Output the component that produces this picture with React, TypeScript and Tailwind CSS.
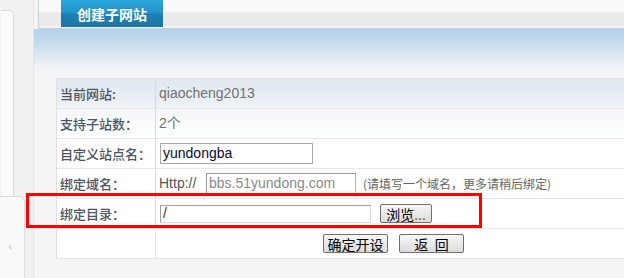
export default function App() {
  const label =
    "flex items-center pl-[3px] text-[13px] font-medium text-[#4a5566] border-r border-[#d9d9d9] font-['Noto_Sans_CJK_SC',sans-serif] leading-none";
  const row = "grid grid-cols-[99px_1fr] h-[30px] border-b border-[#e6e6e6]";
  const btn =
    "h-[19px] flex items-center justify-center border border-[#707070] rounded-[2px] bg-[linear-gradient(#f7f7f7,#dcdcdc)] text-[14px] text-black font-['Noto_Sans_CJK_SC',sans-serif] leading-none";
  return (
    <div className="relative w-[624px] h-[278px] overflow-hidden flex bg-[#f5f5f5] font-['Liberation_Sans','Noto_Sans_CJK_SC',sans-serif]">
      {/* left sidebar */}
      <div className="relative w-[34px] shrink-0 bg-[#f1f1f1] border-r border-[#e4e4e4]">
        <div className="absolute left-[1px] top-[10px] bottom-0 w-[13px] bg-[#fbfbfb] border-r border-t border-[#dcdcdc] rounded-tr-[5px]" />
        <div className="absolute left-0 top-[196px] bottom-0 w-[25px] bg-[#f9f9f9] border-r border-t border-[#dcdcdc] rounded-tr-[6px] flex justify-center">
          <span className="mt-[44px] ml-[-4px] text-[11px] text-[#c4c4c4] leading-none">‹</span>
        </div>
      </div>

      {/* main */}
      <div className="relative flex-1 flex flex-col">
        {/* top bar */}
        <div className="ml-[4px] h-[29px] shrink-0 rounded-bl-[4px] border-l border-b border-[#c9d3dc] bg-[linear-gradient(to_bottom,#fafafa_0px,#f8f8f8_12px,#ebebeb_12px,#ebebeb_26px,#f4f4f4_26px)] shadow-[0_1px_1px_rgba(120,140,160,0.5)]">
          <div className="ml-[22px] w-[102px] h-[27px] flex items-center justify-center bg-[linear-gradient(to_bottom,#2aa4dc_0%,#2393c9_48%,#1e7fb0_52%,#1b76a5_100%)] text-white font-bold text-[14px] font-['Noto_Sans_CJK_SC',sans-serif] leading-none">
            创建子网站
          </div>
        </div>

        {/* blue gradient band */}
        <div className="h-[49px] shrink-0 bg-[linear-gradient(to_bottom,#b3d1ea_0%,#c6dced_30%,#eef2f7_75%,#f5f5f5_100%)]" />

        {/* table */}
        <div className="ml-[22px] border-l border-t border-[#e0e0e0] bg-white">
          <div className={row + " bg-[linear-gradient(to_bottom,#e1e8f1,#eff2f6)]"}>
            <div className={label}>当前网站:</div>
            <div className="flex items-center pl-[3px] text-[14px] text-[#707070]">qiaocheng2013</div>
          </div>
          <div className={row + " bg-[linear-gradient(to_bottom,#f4f6f9,#ffffff)]"}>
            <div className={label}>支持子站数：</div>
            <div className="flex items-center pl-[3px] text-[14px] text-[#707070]">2个</div>
          </div>
          <div className={row}>
            <div className={label}>自定义站点名：</div>
            <div className="flex items-center pl-[4px]">
              <div className="w-[153px] h-[21px] border border-[#a8a8a8] flex items-center pl-[2px] text-[14px] text-[#0a0a30]">yundongba</div>
            </div>
          </div>
          <div className={row}>
            <div className={label}>绑定域名：</div>
            <div className="flex items-center pl-[3px] text-[14px] text-[#555]">
              <span className="w-[47px]">Http://</span>
              <div className="w-[150px] h-[21px] border border-[#b5b5b5] border-t-[#999] border-l-[#999] flex items-center pl-[2px] text-[14px] text-[#8a8a8a]">bbs.51yundong.com</div>
              <span className="ml-[7px] text-[12px] text-[#666] font-['Noto_Sans_CJK_SC',sans-serif] leading-none">(请填写一个域名，更多请稍后绑定)</span>
            </div>
          </div>
          <div className={row}>
            <div className={label}>绑定目录：</div>
            <div className="flex items-center pl-[4px]">
              <div className="w-[211px] h-[18px] border border-[#dcdcdc] border-t-[#a0a0a0] border-l-[#a0a0a0] flex items-center pl-[2px] text-[14px] text-[#333]">/</div>
              <div className={btn + " ml-[9px] w-[52px] text-[13px]"}>
                浏览<span className="text-[#8a7a2a]">...</span>
              </div>
            </div>
          </div>
          <div className={row}>
            <div className="border-r border-[#e6e6e6]" />
            <div className="flex items-center pl-[167px] gap-[11px]">
              <div className={btn + " w-[65px]"}>确定开设</div>
              <div className={btn + " w-[65px]"}>返&nbsp;&nbsp;回</div>
            </div>
          </div>
        </div>
      </div>

      {/* red highlight */}
      <div className="absolute left-[26px] top-[193px] w-[456px] h-[35px] border-[3px] border-[#ff0000]" />
    </div>
  );
}
